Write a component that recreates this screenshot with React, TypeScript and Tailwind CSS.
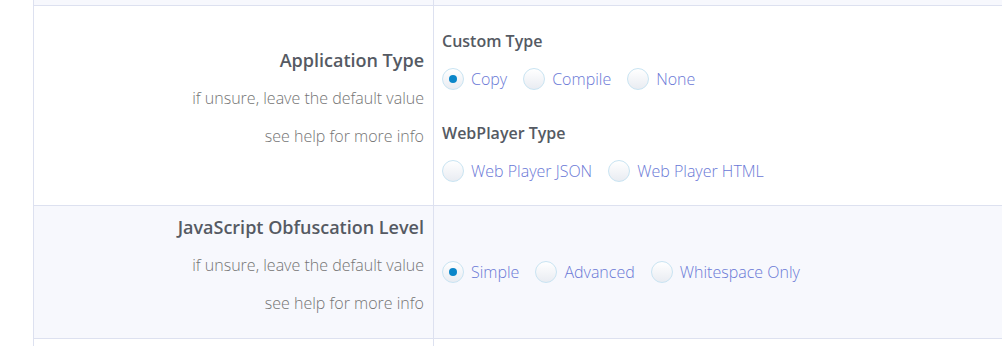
import React from 'react';

type Opt = { label: string; checked?: boolean };

const Radio: React.FC<Opt> = ({ label, checked }) => (
  <label className="flex items-center gap-[7px] h-6">
    <span className="w-[22px] h-[22px] rounded-full border border-[#c9e4f2] bg-gradient-to-b from-white to-[#e9ecf2] flex items-center justify-center shrink-0">
      {checked && <span className="w-[8px] h-[8px] rounded-full bg-[#0b86c9]" />}
    </span>
    <span className="text-[16px] font-light text-[#6a78d6]">{label}</span>
  </label>
);

const RadioGroup: React.FC<{ options: Opt[] }> = ({ options }) => (
  <div className="flex items-center gap-[16px]">
    {options.map((o) => (
      <Radio key={o.label} {...o} />
    ))}
  </div>
);

const Hint: React.FC<{ title: string }> = ({ title }) => (
  <div className="text-right pr-[9px] leading-[38px]">
    <div className="text-[18px] font-semibold text-[#555a63]">{title}</div>
    <div className="text-[16px] font-light text-[#747474]">if unsure, leave the default value</div>
    <div className="text-[16px] font-light text-[#747474]">see help for more info</div>
  </div>
);

export default function App() {
  return (
    <div className="w-[1002px] h-[346px] bg-white overflow-hidden" style={{ fontFamily: '"Open Sans", sans-serif' }}>
      <div className="ml-[33px] border-l border-[#dde1f0]">
        {/* previous row tail */}
        <div className="h-[6px] bg-[#f7f8fd] border-b border-[#dde1f0] flex">
          <div className="w-[400px] border-r border-[#dde1f0]" />
        </div>

        {/* Application Type */}
        <div className="flex h-[200px] border-b border-[#dde1f0]">
          <div className="w-[400px] border-r border-[#dde1f0] pt-[35px]">
            <Hint title="Application Type" />
          </div>
          <div className="flex-1 pl-[8px] pt-[25px]">
            <div className="text-[16px] font-semibold text-[#555a63] leading-5">Custom Type</div>
            <div className="mt-[16px]">
              <RadioGroup options={[{ label: 'Copy', checked: true }, { label: 'Compile' }, { label: 'None' }]} />
            </div>
            <div className="mt-[32px] text-[16px] font-semibold text-[#555a63] leading-5">WebPlayer Type</div>
            <div className="mt-[16px]">
              <RadioGroup options={[{ label: 'Web Player JSON' }, { label: 'Web Player HTML' }]} />
            </div>
          </div>
        </div>

        {/* JavaScript Obfuscation Level */}
        <div className="flex h-[133px] bg-[#f7f8fd] border-b border-[#dde1f0]">
          <div className="w-[400px] border-r border-[#dde1f0] pt-[2px]">
            <Hint title="JavaScript Obfuscation Level" />
          </div>
          <div className="flex-1 pl-[8px] flex items-center">
            <RadioGroup options={[{ label: 'Simple', checked: true }, { label: 'Advanced' }, { label: 'Whitespace Only' }]} />
          </div>
        </div>

        <div className="flex h-[10px]">
          <div className="w-[400px] border-r border-[#dde1f0]" />
        </div>
      </div>
    </div>
  );
}
